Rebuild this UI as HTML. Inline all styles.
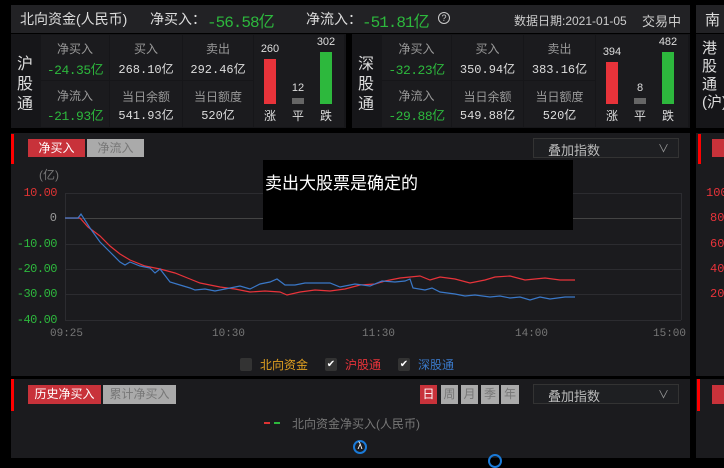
<!DOCTYPE html><html><head><meta charset="utf-8"><style>
*{margin:0;padding:0;box-sizing:border-box}
body{width:724px;height:458px;background:#000;overflow:hidden;position:relative;font-family:"Liberation Sans","Noto Sans CJK SC",sans-serif;color:#ccc}
.a{position:absolute;white-space:nowrap}
.p{position:absolute;background:#1b1b1e}
.g{color:#2db83d}.r{color:#e8333a}
.c{text-align:center;font-size:12px}
.m{font-family:"Liberation Mono","Noto Sans CJK SC",monospace}
</style></head><body>
<div class="p" style="left:11px;top:5px;width:679px;height:28px;background:#222225"></div>
<div class="a" style="left:20px;top:9px;font-size:14px;color:#ddd">北向资金(人民币)</div>
<div class="a" style="left:150px;top:9px;font-size:14px;color:#ddd">净买入：</div>
<div class="a g m" style="left:207px;top:8px;font-size:16px;letter-spacing:-1px">-56.58亿</div>
<div class="a" style="left:306px;top:9px;font-size:14px;color:#ddd">净流入：</div>
<div class="a g m" style="left:362px;top:8px;font-size:16px;letter-spacing:-1px">-51.81亿</div>
<div class="a" style="left:438px;top:12px;width:12px;height:12px;border:1px solid #ccc;border-radius:50%;font-size:9px;text-align:center;line-height:10px">?</div>
<div class="a" style="left:514px;top:12px;font-size:12px;color:#ccc">数据日期:2021-01-05</div>
<div class="a" style="left:642px;top:11px;font-size:13px;color:#ccc">交易中</div>
<div class="p" style="left:696px;top:5px;width:28px;height:28px;background:#222225"></div>
<div class="a" style="left:705px;top:9px;font-size:15px;color:#ddd">南</div>

<div class="p" style="left:11px;top:34px;width:335px;height:94px;background:#161619"></div>
<div class="a" style="left:17px;top:55px;font-size:16px;line-height:20px;width:18px;color:#ddd;white-space:normal">沪股通</div>
<div class="p" style="left:41px;top:35px;width:68px;height:45px"></div><div class="p" style="left:110px;top:35px;width:72px;height:45px"></div><div class="p" style="left:183px;top:35px;width:70px;height:45px"></div>
<div class="p" style="left:41px;top:81px;width:68px;height:46px"></div><div class="p" style="left:110px;top:81px;width:72px;height:46px"></div><div class="p" style="left:183px;top:81px;width:70px;height:46px"></div>
<div class="p" style="left:254px;top:35px;width:90px;height:92px"></div>
<div class="a c" style="left:41px;top:40px;width:68px;color:#999">净买入</div>
<div class="a c g m" style="left:41px;top:59px;width:68px;font-size:13px;letter-spacing:-0.5px">-24.35亿</div>
<div class="a c" style="left:110px;top:40px;width:72px;color:#999">买入</div>
<div class="a c m" style="left:110px;top:60px;width:72px;color:#ddd">268.10亿</div>
<div class="a c" style="left:183px;top:40px;width:70px;color:#999">卖出</div>
<div class="a c m" style="left:183px;top:60px;width:70px;color:#ddd">292.46亿</div>
<div class="a c" style="left:41px;top:87px;width:68px;color:#999">净流入</div>
<div class="a c g m" style="left:41px;top:105px;width:68px;font-size:13px;letter-spacing:-0.5px">-21.93亿</div>
<div class="a c" style="left:110px;top:88px;width:72px;color:#999">当日余额</div>
<div class="a c m" style="left:110px;top:106px;width:72px;color:#ddd">541.93亿</div>
<div class="a c" style="left:183px;top:88px;width:70px;color:#999">当日额度</div>
<div class="a c m" style="left:183px;top:106px;width:70px;color:#ddd">520亿</div>
<div class="a" style="left:264px;top:59px;width:12px;height:45px;background:#e8333a"></div>
<div class="a" style="left:292px;top:98px;width:12px;height:6px;background:#666"></div>
<div class="a" style="left:320px;top:52px;width:12px;height:52px;background:#2db83d"></div>
<div class="a c" style="left:258px;top:43px;width:24px;font-size:11px;color:#ddd">260</div>
<div class="a c" style="left:286px;top:82px;width:24px;font-size:11px;color:#ddd">12</div>
<div class="a c" style="left:314px;top:36px;width:24px;font-size:11px;color:#ddd">302</div>
<div class="a c" style="left:258px;top:107px;width:24px;color:#ddd">涨</div>
<div class="a c" style="left:286px;top:107px;width:24px;color:#ddd">平</div>
<div class="a c" style="left:314px;top:107px;width:24px;color:#ddd">跌</div>

<div class="p" style="left:352px;top:34px;width:338px;height:94px;background:#161619"></div>
<div class="a" style="left:358px;top:55px;font-size:16px;line-height:20px;width:18px;color:#ddd;white-space:normal">深股通</div>
<div class="p" style="left:382px;top:35px;width:69px;height:45px"></div><div class="p" style="left:452px;top:35px;width:71px;height:45px"></div><div class="p" style="left:524px;top:35px;width:71px;height:45px"></div>
<div class="p" style="left:382px;top:81px;width:69px;height:46px"></div><div class="p" style="left:452px;top:81px;width:71px;height:46px"></div><div class="p" style="left:524px;top:81px;width:71px;height:46px"></div>
<div class="p" style="left:596px;top:35px;width:92px;height:92px"></div>
<div class="a c" style="left:382px;top:40px;width:69px;color:#999">净买入</div>
<div class="a c g m" style="left:382px;top:59px;width:69px;font-size:13px;letter-spacing:-0.5px">-32.23亿</div>
<div class="a c" style="left:452px;top:40px;width:71px;color:#999">买入</div>
<div class="a c m" style="left:452px;top:60px;width:71px;color:#ddd">350.94亿</div>
<div class="a c" style="left:524px;top:40px;width:71px;color:#999">卖出</div>
<div class="a c m" style="left:524px;top:60px;width:71px;color:#ddd">383.16亿</div>
<div class="a c" style="left:382px;top:87px;width:69px;color:#999">净流入</div>
<div class="a c g m" style="left:382px;top:105px;width:69px;font-size:13px;letter-spacing:-0.5px">-29.88亿</div>
<div class="a c" style="left:452px;top:88px;width:71px;color:#999">当日余额</div>
<div class="a c m" style="left:452px;top:106px;width:71px;color:#ddd">549.88亿</div>
<div class="a c" style="left:524px;top:88px;width:71px;color:#999">当日额度</div>
<div class="a c m" style="left:524px;top:106px;width:71px;color:#ddd">520亿</div>
<div class="a" style="left:606px;top:62px;width:12px;height:42px;background:#e8333a"></div>
<div class="a" style="left:634px;top:98px;width:12px;height:6px;background:#666"></div>
<div class="a" style="left:662px;top:52px;width:12px;height:52px;background:#2db83d"></div>
<div class="a c" style="left:600px;top:46px;width:24px;font-size:11px;color:#ddd">394</div>
<div class="a c" style="left:628px;top:82px;width:24px;font-size:11px;color:#ddd">8</div>
<div class="a c" style="left:656px;top:36px;width:24px;font-size:11px;color:#ddd">482</div>
<div class="a c" style="left:600px;top:107px;width:24px;color:#ddd">涨</div>
<div class="a c" style="left:628px;top:107px;width:24px;color:#ddd">平</div>
<div class="a c" style="left:656px;top:107px;width:24px;color:#ddd">跌</div>
<div class="p" style="left:696px;top:34px;width:28px;height:94px;background:#161619"></div>
<div class="a" style="left:702px;top:40px;font-size:15px;line-height:18px;width:16px;color:#ddd;white-space:normal">港股通(沪)</div>

<div class="p" style="left:11px;top:133px;width:679px;height:243px"></div>
<div class="a" style="left:11px;top:134px;width:3px;height:30px;background:#f00"></div>
<div class="a c" style="left:28px;top:139px;width:57px;height:18px;background:#c8323a;color:#fff;font-size:12px;line-height:18px">净买入</div>
<div class="a c" style="left:87px;top:139px;width:57px;height:18px;background:#aaa;color:#777;font-size:12px;line-height:18px">净流入</div>
<div class="a" style="left:533px;top:138px;width:146px;height:20px;border:1px solid #333;background:#1e1f22"></div>
<div class="a" style="left:548px;top:140px;font-size:13px;color:#bbb">叠加指数</div>
<div class="a" style="left:658px;top:140px;font-size:11px;color:#999">∨</div>
<div class="a" style="left:39px;top:166px;font-size:12px;color:#777">(亿)</div>
<div class="a m" style="right:667px;top:186px;font-size:12px;color:#d33;letter-spacing:-0.5px">10.00</div>
<div class="a m" style="right:667px;top:211px;font-size:12px;color:#999">0</div>
<div class="a m g" style="right:667px;top:237px;font-size:12px;letter-spacing:-0.5px">-10.00</div>
<div class="a m g" style="right:667px;top:262px;font-size:12px;letter-spacing:-0.5px">-20.00</div>
<div class="a m g" style="right:667px;top:287px;font-size:12px;letter-spacing:-0.5px">-30.00</div>
<div class="a m g" style="right:667px;top:313px;font-size:12px;letter-spacing:-0.5px">-40.00</div>
<svg class="a" style="left:0;top:0" width="724" height="458">
<g stroke="#2c2c30" stroke-width="1"><line x1="65" y1="193.5" x2="681" y2="193.5"/><line x1="65" y1="244.5" x2="681" y2="244.5"/><line x1="65" y1="269.5" x2="681" y2="269.5"/><line x1="65" y1="294.5" x2="681" y2="294.5"/><line x1="65" y1="320.5" x2="681" y2="320.5"/><line x1="65.5" y1="193" x2="65.5" y2="320"/><line x1="681.5" y1="193" x2="681.5" y2="320"/></g>
<line x1="65" y1="218.5" x2="681" y2="218.5" stroke="#444"/>
<polyline fill="none" stroke="#e8333a" stroke-width="1.2" points="65,218 78,218 80,218 88,227 100,236 110,246 120,254 130,260 145,266 160,269 175,273 190,279 200,283 210,285 220,287 235,289 250,292 265,291 280,292 287,295 300,292 315,290 330,291 345,289 360,285 375,284 385,281 400,278 420,276 430,280 440,277 455,279 470,283 485,280 495,277 510,276 525,280 545,278 560,280 575,280"/>
<polyline fill="none" stroke="#3a78c8" stroke-width="1.2" points="65,218 78,218 81,214 90,228 100,242 110,252 120,262 125,265 130,262 140,266 150,268 155,273 160,269 170,282 180,285 190,288 195,290 205,289 215,291 230,288 240,286 250,289 260,284 270,282 277,279 285,285 295,285 305,283 315,283 330,283 340,287 355,284 370,286 382,281 395,282 405,281 410,279 413,288 425,290 432,288 440,292 455,294 465,296 475,295 490,297 500,296 510,298 520,297 530,300 540,297 550,299 565,297 575,297"/>
</svg>
<div class="a" style="left:263px;top:160px;width:310px;height:70px;background:#000"></div>
<div class="a" style="left:265px;top:169px;font-size:17px;color:#fff">卖出大股票是确定的</div>
<div class="a m" style="left:50px;top:328px;font-size:11px;color:#777">09:25</div>
<div class="a m" style="left:212px;top:328px;font-size:11px;color:#777">10:30</div>
<div class="a m" style="left:362px;top:328px;font-size:11px;color:#777">11:30</div>
<div class="a m" style="left:515px;top:328px;font-size:11px;color:#777">14:00</div>
<div class="a m" style="left:653px;top:328px;font-size:11px;color:#777">15:00</div>
<div class="a" style="left:240px;top:358px;width:12px;height:13px;background:#333;border-radius:2px"></div>
<div class="a" style="left:260px;top:356px;font-size:12px;color:#e0a020">北向资金</div>
<div class="a" style="left:325px;top:358px;width:12px;height:13px;background:#333;border-radius:2px;color:#fff;font-size:10px;text-align:center;line-height:13px">✔</div>
<div class="a r" style="left:345px;top:356px;font-size:12px">沪股通</div>
<div class="a" style="left:398px;top:358px;width:12px;height:13px;background:#333;border-radius:2px;color:#fff;font-size:10px;text-align:center;line-height:13px">✔</div>
<div class="a" style="left:418px;top:356px;font-size:12px;color:#3a78c8">深股通</div>
<div class="p" style="left:696px;top:133px;width:28px;height:243px"></div>
<div class="a" style="left:698px;top:134px;width:3px;height:30px;background:#f00"></div>
<div class="a" style="left:712px;top:139px;width:12px;height:18px;background:#c8323a"></div>
<div class="a m r" style="left:706px;top:186px;font-size:12px">100</div>
<div class="a m r" style="left:710px;top:211px;font-size:12px">80</div>
<div class="a m r" style="left:710px;top:237px;font-size:12px">60</div>
<div class="a m r" style="left:710px;top:262px;font-size:12px">40</div>
<div class="a m r" style="left:710px;top:287px;font-size:12px">20</div>

<div class="p" style="left:11px;top:379px;width:679px;height:79px"></div>
<div class="a" style="left:11px;top:379px;width:3px;height:32px;background:#f00"></div>
<div class="a c" style="left:28px;top:385px;width:73px;height:19px;background:#c8323a;color:#fff;line-height:19px">历史净买入</div>
<div class="a c" style="left:103px;top:385px;width:73px;height:19px;background:#aaa;color:#777;line-height:19px">累计净买入</div>
<div class="a c" style="left:420px;top:385px;width:17px;height:19px;background:#c8323a;color:#fff;line-height:19px">日</div>
<div class="a c" style="left:441px;top:385px;width:17px;height:19px;background:#aaa;color:#777;line-height:19px">周</div>
<div class="a c" style="left:461px;top:385px;width:17px;height:19px;background:#aaa;color:#777;line-height:19px">月</div>
<div class="a c" style="left:481px;top:385px;width:18px;height:19px;background:#aaa;color:#777;line-height:19px">季</div>
<div class="a c" style="left:501px;top:385px;width:18px;height:19px;background:#aaa;color:#777;line-height:19px">年</div>
<div class="a" style="left:533px;top:384px;width:146px;height:20px;border:1px solid #333;background:#1e1f22"></div>
<div class="a" style="left:548px;top:386px;font-size:13px;color:#bbb">叠加指数</div>
<div class="a" style="left:658px;top:386px;font-size:11px;color:#999">∨</div>
<div class="a" style="left:264px;top:422px;width:6px;height:2px;background:#d33"></div>
<div class="a" style="left:274px;top:422px;width:6px;height:2px;background:#2db83d"></div>
<div class="a" style="left:292px;top:415px;font-size:12px;color:#777">北向资金净买入(人民币)</div>
<div class="a" style="left:353px;top:440px;width:14px;height:14px;border:2px solid #1a7ad8;border-radius:50%;color:#fff;font-size:10px;text-align:center;line-height:10px">λ</div>
<div class="a" style="left:488px;top:454px;width:14px;height:14px;border:2px solid #1a7ad8;border-radius:50%"></div>
<div class="p" style="left:696px;top:379px;width:28px;height:79px"></div>
<div class="a" style="left:697px;top:379px;width:3px;height:32px;background:#f00"></div>
<div class="a" style="left:712px;top:385px;width:12px;height:19px;background:#c8323a"></div>
</body></html>
